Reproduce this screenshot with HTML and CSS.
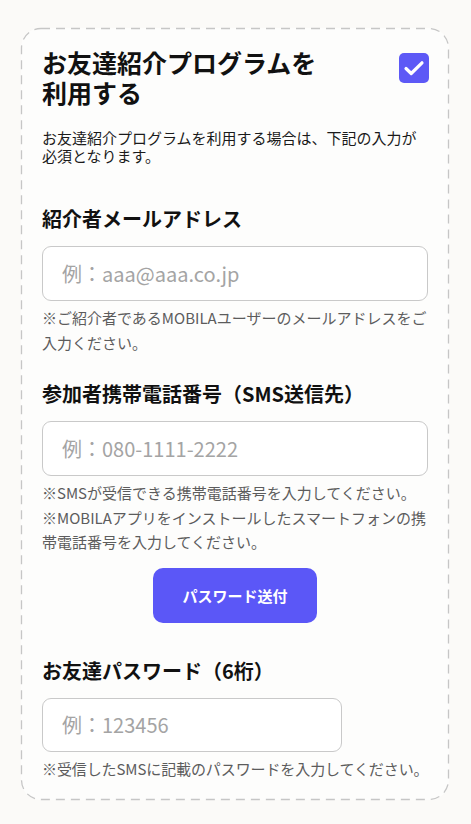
FILE: index.html
```html
<!DOCTYPE html>
<html lang="ja">
<head>
<meta charset="utf-8">
<title>お友達紹介プログラム</title>
<link rel="stylesheet" href="styles.css">
</head>
<body>
<div class="page">
  <section class="card">
    <svg class="frame" aria-hidden="true"><rect class="frame-rect" x="0.5" y="0.5" rx="19.5" ry="19.5"/></svg>
    <div class="head">
      <h1 class="title">お友達紹介プログラムを<br>利用する</h1>
      <span class="check" role="checkbox" aria-checked="true">
        <svg viewBox="0 0 30 30" width="30" height="30"><polyline points="7,15.5 12.2,20.5 23,9.8" fill="none" stroke="#fff" stroke-width="3.2" stroke-linecap="round" stroke-linejoin="round"/></svg>
      </span>
    </div>
    <p class="desc">お友達紹介プログラムを利用する場合は、下記の入力が必須となります。</p>

    <div class="field field-first">
      <label class="label">紹介者メールアドレス</label>
      <input class="input" type="text" placeholder="例：aaa@aaa.co.jp">
      <p class="hint">※ご紹介者であるMOBILAユーザーのメールアドレスをご入力ください。</p>
    </div>

    <div class="field">
      <label class="label">参加者携帯電話番号（SMS送信先）</label>
      <input class="input" type="text" placeholder="例：080-1111-2222">
      <p class="hint">※SMSが受信できる携帯電話番号を入力してください。<br>※MOBILAアプリをインストールしたスマートフォンの携帯電話番号を入力してください。</p>
    </div>

    <div class="actions">
      <button class="btn" type="button">パスワード送付</button>
    </div>

    <div class="field field-pw">
      <label class="label">お友達パスワード（6桁）</label>
      <input class="input input-short" type="text" placeholder="例：123456">
      <p class="hint hint-tight">※受信したSMSに記載のパスワードを入力してください。</p>
    </div>
  </section>
</div>
</body>
</html>
```
FILE: styles.css
```css
html, body {
  margin: 0;
  background: #fbfaf8;
}
body {
  font-family: "Noto Sans CJK JP", "Noto Sans", sans-serif;
  color: #111;
}
.page {
  padding: 28px 22px 24px 21px;
}
.card {
  position: relative;
  border: 1px solid transparent;
  border-radius: 20px;
  padding: 18px 20px 18px;
  background: #fdfdfc;
}
.frame {
  position: absolute;
  left: -1px;
  top: -1px;
  width: calc(100% + 2px);
  height: calc(100% + 2px);
  overflow: visible;
  pointer-events: none;
}
.frame-rect {
  width: calc(100% - 1px);
  height: calc(100% - 1px);
  fill: none;
  stroke: #c6c6c6;
  stroke-width: 1.3;
  stroke-dasharray: 9 6;
}
.head {
  display: flex;
  justify-content: space-between;
  align-items: flex-start;
}
.title {
  margin: 0;
  font-size: 25px;
  line-height: 30px;
  font-weight: 700;
  color: #111;
}
.check {
  display: block;
  width: 30px;
  height: 30px;
  border-radius: 5px;
  background: #5d59f6;
  margin-top: 6px;
  margin-right: -1px;
}
.check svg {
  display: block;
}
.desc {
  margin: 22px 0 0;
  font-size: 15px;
  line-height: 18px;
  color: #1a1a1a;
}
.field {
  margin-top: 24px;
}
.field-first {
  margin-top: 39px;
}
.field-pw {
  margin-top: 33px;
}
.label {
  display: block;
  font-size: 20px;
  line-height: 30px;
  font-weight: 700;
  color: #111;
}
.input {
  display: block;
  box-sizing: border-box;
  width: 100%;
  height: 55px;
  margin-top: 12px;
  padding: 0 19px;
  border: 1px solid #c9c9c9;
  border-radius: 9px;
  background: #fff;
  font-family: inherit;
  font-size: 20px;
  color: #333;
  outline: none;
}
.input::placeholder {
  color: #a4a4a4;
}
.input-short {
  width: 300px;
  height: 54px;
}
.hint {
  margin: 5px 0 0;
  font-size: 15px;
  line-height: 24.5px;
  color: #5c5c5c;
}
.hint-tight {
  letter-spacing: -0.1px;
  white-space: nowrap;
}
.actions {
  display: flex;
  justify-content: center;
  margin-top: 13px;
}
.btn {
  width: 164px;
  height: 55px;
  border: none;
  border-radius: 10px;
  background: #5b57f7;
  color: #fff;
  font-family: inherit;
  font-size: 15px;
  font-weight: 700;
  cursor: pointer;
}
```
